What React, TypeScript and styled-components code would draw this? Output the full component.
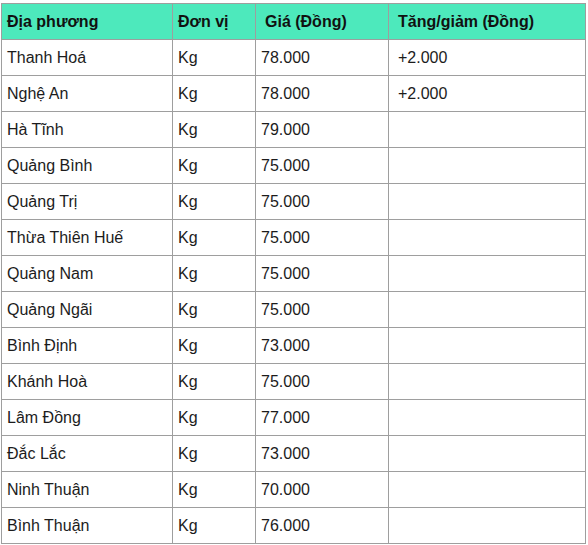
import React from 'react';
import styled, { createGlobalStyle } from 'styled-components';

const GlobalStyle = createGlobalStyle`
    body {
        margin: 0;
        background: #fff;
        font-family: "Liberation Sans", Arial, sans-serif;
    }
`;

const rows: [string, string, string, string][] = [
    ['Thanh Hoá', 'Kg', '78.000', '+2.000'],
    ['Nghệ An', 'Kg', '78.000', '+2.000'],
    ['Hà Tĩnh', 'Kg', '79.000', ''],
    ['Quảng Bình', 'Kg', '75.000', ''],
    ['Quảng Trị', 'Kg', '75.000', ''],
    ['Thừa Thiên Huế', 'Kg', '75.000', ''],
    ['Quảng Nam', 'Kg', '75.000', ''],
    ['Quảng Ngãi', 'Kg', '75.000', ''],
    ['Bình Định', 'Kg', '73.000', ''],
    ['Khánh Hoà', 'Kg', '75.000', ''],
    ['Lâm Đồng', 'Kg', '77.000', ''],
    ['Đắc Lắc', 'Kg', '73.000', ''],
    ['Ninh Thuận', 'Kg', '70.000', ''],
    ['Bình Thuận', 'Kg', '76.000', ''],
];

export default function App() {
    return (
        <>
            <GlobalStyle />
            <Wrapper>
                <PriceTable>
                    <thead>
                        <tr>
                            <HeadCell>Địa phương</HeadCell>
                            <HeadCell>Đơn vị</HeadCell>
                            <HeadCell $indent>Giá (Đồng)</HeadCell>
                            <HeadCell $indent>Tăng/giảm (Đồng)</HeadCell>
                        </tr>
                    </thead>
                    <tbody>
                        {rows.map(([place, unit, price, change]) => (
                            <tr key={place}>
                                <Cell>{place}</Cell>
                                <Cell>{unit}</Cell>
                                <Cell>{price}</Cell>
                                <Cell $indent>{change}</Cell>
                            </tr>
                        ))}
                    </tbody>
                </PriceTable>
            </Wrapper>
        </>
    );
}

const Wrapper = styled.div`
    padding: 3px 0 0 1px;
`;

const PriceTable = styled.table`
    border-collapse: collapse;
    table-layout: fixed;
    width: 585px;
    font-size: 16px;
    color: #1c1c1c;

    tr > :nth-child(1) {
        width: 171px;
    }
    tr > :nth-child(2) {
        width: 83px;
    }
    tr > :nth-child(3) {
        width: 133px;
    }
    tr > :nth-child(4) {
        width: 197px;
    }
`;

const Cell = styled.td<{ $indent?: boolean }>`
    height: 36px;
    padding: 0 5px 0 ${(p) => (p.$indent ? '9px' : '5px')};
    border: 1px solid #9e9e9e;
    text-align: left;
    vertical-align: middle;
    box-sizing: border-box;
    white-space: nowrap;
`;

const HeadCell = styled(Cell).attrs({ as: 'th' })`
    background: #4de9bc;
    font-weight: bold;
    color: #111;
`;
